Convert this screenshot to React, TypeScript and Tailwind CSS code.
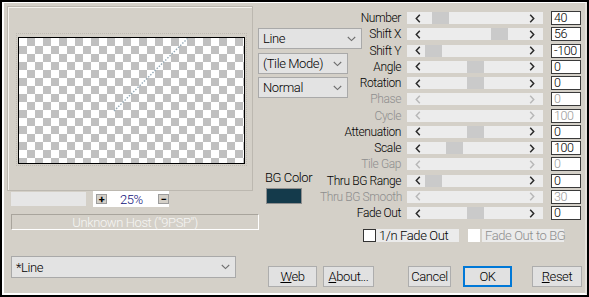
import React from "react";

const F = "font-['Roboto',Arial,sans-serif] font-light tracking-[-0.4px]";

type Row = { label: string; value: string; thumb?: number; disabled?: boolean };

const rows: Row[] = [
  { label: "Number", value: "40", thumb: 25 },
  { label: "Shift X", value: "56", thumb: 84 },
  { label: "Shift Y", value: "-100", thumb: 18 },
  { label: "Angle", value: "0", thumb: 60 },
  { label: "Rotation", value: "0", thumb: 60 },
  { label: "Phase", value: "0", disabled: true },
  { label: "Cycle", value: "100", disabled: true },
  { label: "Attenuation", value: "0", thumb: 60 },
  { label: "Scale", value: "100", thumb: 39 },
  { label: "Tile Gap", value: "0", disabled: true },
  { label: "Thru BG Range", value: "0", thumb: 18 },
  { label: "Thru BG Smooth", value: "30", disabled: true },
  { label: "Fade Out", value: "0", thumb: 60 },
];

function Arrow({ dir, disabled }: { dir: "l" | "r"; disabled?: boolean }) {
  return (
    <svg width="6" height="9" viewBox="0 0 6 9" className="block">
      <path
        d={dir === "l" ? "M4.8 0.8 L1.3 4.5 L4.8 8.2" : "M1.2 0.8 L4.7 4.5 L1.2 8.2"}
        fill="none"
        stroke={disabled ? "#b8b8b8" : "#2a2a2a"}
        strokeWidth="1.5"
      />
    </svg>
  );
}

function DownChevron() {
  return (
    <svg width="9" height="6" viewBox="0 0 9 6" className="block">
      <path d="M0.8 1 L4.5 4.6 L8.2 1" fill="none" stroke="#6e6e6e" strokeWidth="1.1" />
    </svg>
  );
}

function Select({ text, w, h, cls }: { text: React.ReactNode; w: string; h: string; cls?: string }) {
  return (
    <div
      className={`${w} ${h} ${cls ?? ""} flex items-center justify-between bg-[#e3e3e3] border border-[#a9a9a9] pl-[4px] pr-[5px] text-[13px] text-black`}
    >
      <span className="leading-none">{text}</span>
      <DownChevron />
    </div>
  );
}

function SliderRow({ r }: { r: Row }) {
  return (
    <div className="flex items-center h-[16.25px]">
      <div
        className={`w-[81px] text-right text-[12px] leading-none whitespace-nowrap ${
          r.disabled ? "text-[#8e8e8e]" : "text-black"
        }`}
      >
        {r.label}
      </div>
      <div className="relative ml-[6px] w-[136px] h-[12px] bg-[#ececec] flex items-center justify-between px-[8px]">
        {r.thumb !== undefined && (
          <div className="absolute top-0 h-[12px] w-[17px] bg-[#cacaca]" style={{ left: r.thumb }} />
        )}
        <Arrow dir="l" disabled={r.disabled} />
        <Arrow dir="r" disabled={r.disabled} />
      </div>
      <div
        className={`ml-[8px] w-[30px] h-[14px] bg-white border border-[#3a3a3a] pl-[2px] text-[12.5px] leading-[12px] ${
          r.disabled ? "text-[#9a9a9a]" : "text-black"
        }`}
      >
        {r.value}
      </div>
    </div>
  );
}

function Btn({ children, w, ml, ok }: { children: React.ReactNode; w: string; ml: string; ok?: boolean }) {
  return (
    <div
      className={`${w} ${ml} h-[21px] flex items-center justify-center bg-[#e1e1e1] text-[13px] text-black ${
        ok ? "border-2 border-[#0078d7]" : "border border-[#adadad]"
      }`}
    >
      {children}
    </div>
  );
}

export default function App() {
  return (
    <div className={`w-[589px] h-[297px] border-2 border-black bg-black ${F}`}>
      <div className="w-full h-full bg-[#d4d0c8] border-t border-l-2 border-b-2 border-white border-r-2 border-r-[#e4e1db] flex">
        {/* Left column */}
        <div className="w-[254px] shrink-0 flex flex-col">
          <div className="ml-[3px] mt-[3px] w-[246px] h-[185px] border border-[#bcb8b0] shadow-[inset_1px_1px_0_#f4f2ee]">
            <div className="ml-[8px] mt-[26px] w-[231px] h-[133px] border border-dotted border-[#bfbbb3] pl-[1px] pt-[3px]">
              <div className="relative w-[227px] h-[127px] border border-black bg-[conic-gradient(#c0c0c0_25%,#ffffff_0_50%,#c0c0c0_0_75%,#ffffff_0)] bg-[length:16px_16px]">
                <svg width="225" height="125" className="absolute left-0 top-0">
                  <line x1="95" y1="73" x2="169" y2="0" stroke="#93a9b6" strokeWidth="1.4" strokeDasharray="1.5 1.5" />
                </svg>
              </div>
            </div>
          </div>

          <div className="flex items-center h-[16px]">
            <div className="ml-[7px] w-[75px] h-[14px] bg-[#e6e6e6]" />
            <div className="ml-[7px] w-[76px] h-[16px] bg-white flex items-center">
              <div className="ml-[3px] w-[11px] h-[10px] bg-[#d4d0c8] border border-[#9c9c9c] flex items-center justify-center text-[11px] font-bold leading-none text-black">
                +
              </div>
              <div className="ml-[13px] text-[13px] leading-none text-[#10107a]">25%</div>
              <div className="ml-[15px] w-[11px] h-[10px] bg-[#d4d0c8] border border-[#9c9c9c] flex items-center justify-center text-[11px] font-bold leading-none text-black">
                −
              </div>
            </div>
          </div>

          <div className="ml-[7px] mt-[7px] w-[248px] h-[16px] shrink-0 border border-[#a8a49c] border-r-white border-b-white flex items-center justify-center text-[13px] leading-none text-[#f6f6f4]">
            Unknown Host ("9PSP")
          </div>

          <Select text="*Line" w="w-[225px]" h="h-[22px]" cls="ml-[7px] mt-[26px]" />
        </div>

        {/* Right area */}
        <div className="flex-1 flex flex-col">
          <div className="flex">
            <div className="w-[62px] shrink-0 flex flex-col">
              <Select text="Line" w="w-[104px]" h="h-[21px]" cls="mt-[25px] shrink-0" />
              <Select text="(Tile Mode)" w="w-[90px]" h="h-[21px]" cls="mt-[4px] shrink-0" />
              <Select text="Normal" w="w-[90px]" h="h-[21px]" cls="mt-[3px] shrink-0" />
              <div className="ml-[7px] mt-[72px] text-[13px] leading-[16px] text-black whitespace-nowrap">BG Color</div>
              <div className="ml-[8px] mt-[2px] w-[36px] h-[16px] border border-[#8e8e8e] bg-[#143a4b]" />
            </div>
            <div className="flex flex-col pt-[7px]">
              {rows.map((r) => (
                <SliderRow key={r.label} r={r} />
              ))}
            </div>
          </div>

          <div className="flex items-center mt-[8px] h-[13px]">
            <div className="ml-[105px] w-[13px] h-[13px] bg-white border border-[#333333]" />
            <div className="w-[83px] h-[13px] bg-[#ebebeb] pl-[3px] text-[13px] leading-[13px] text-black whitespace-nowrap">
              1/n Fade Out
            </div>
            <div className="ml-[9px] w-[12px] h-[13px] bg-white" />
            <div className="ml-[2px] w-[82px] h-[13px] bg-[#ebebeb] pl-[3px] text-[13px] leading-[13px] text-[#8e8e8e] whitespace-nowrap">
              Fade Out to BG
            </div>
          </div>

          <div className="flex items-center mt-[24px]">
            <Btn w="w-[49px]" ml="ml-[10px]">
              <span><span className="underline">W</span>eb</span>
            </Btn>
            <Btn w="w-[51px]" ml="ml-[6px]">
              <span><span className="underline">A</span>bout...</span>
            </Btn>
            <Btn w="w-[43px]" ml="ml-[34px]">Cancel</Btn>
            <Btn w="w-[49px]" ml="ml-[12px]" ok>OK</Btn>
            <Btn w="w-[50px]" ml="ml-[20px]">
              <span><span className="underline">R</span>eset</span>
            </Btn>
          </div>
        </div>
      </div>
    </div>
  );
}
